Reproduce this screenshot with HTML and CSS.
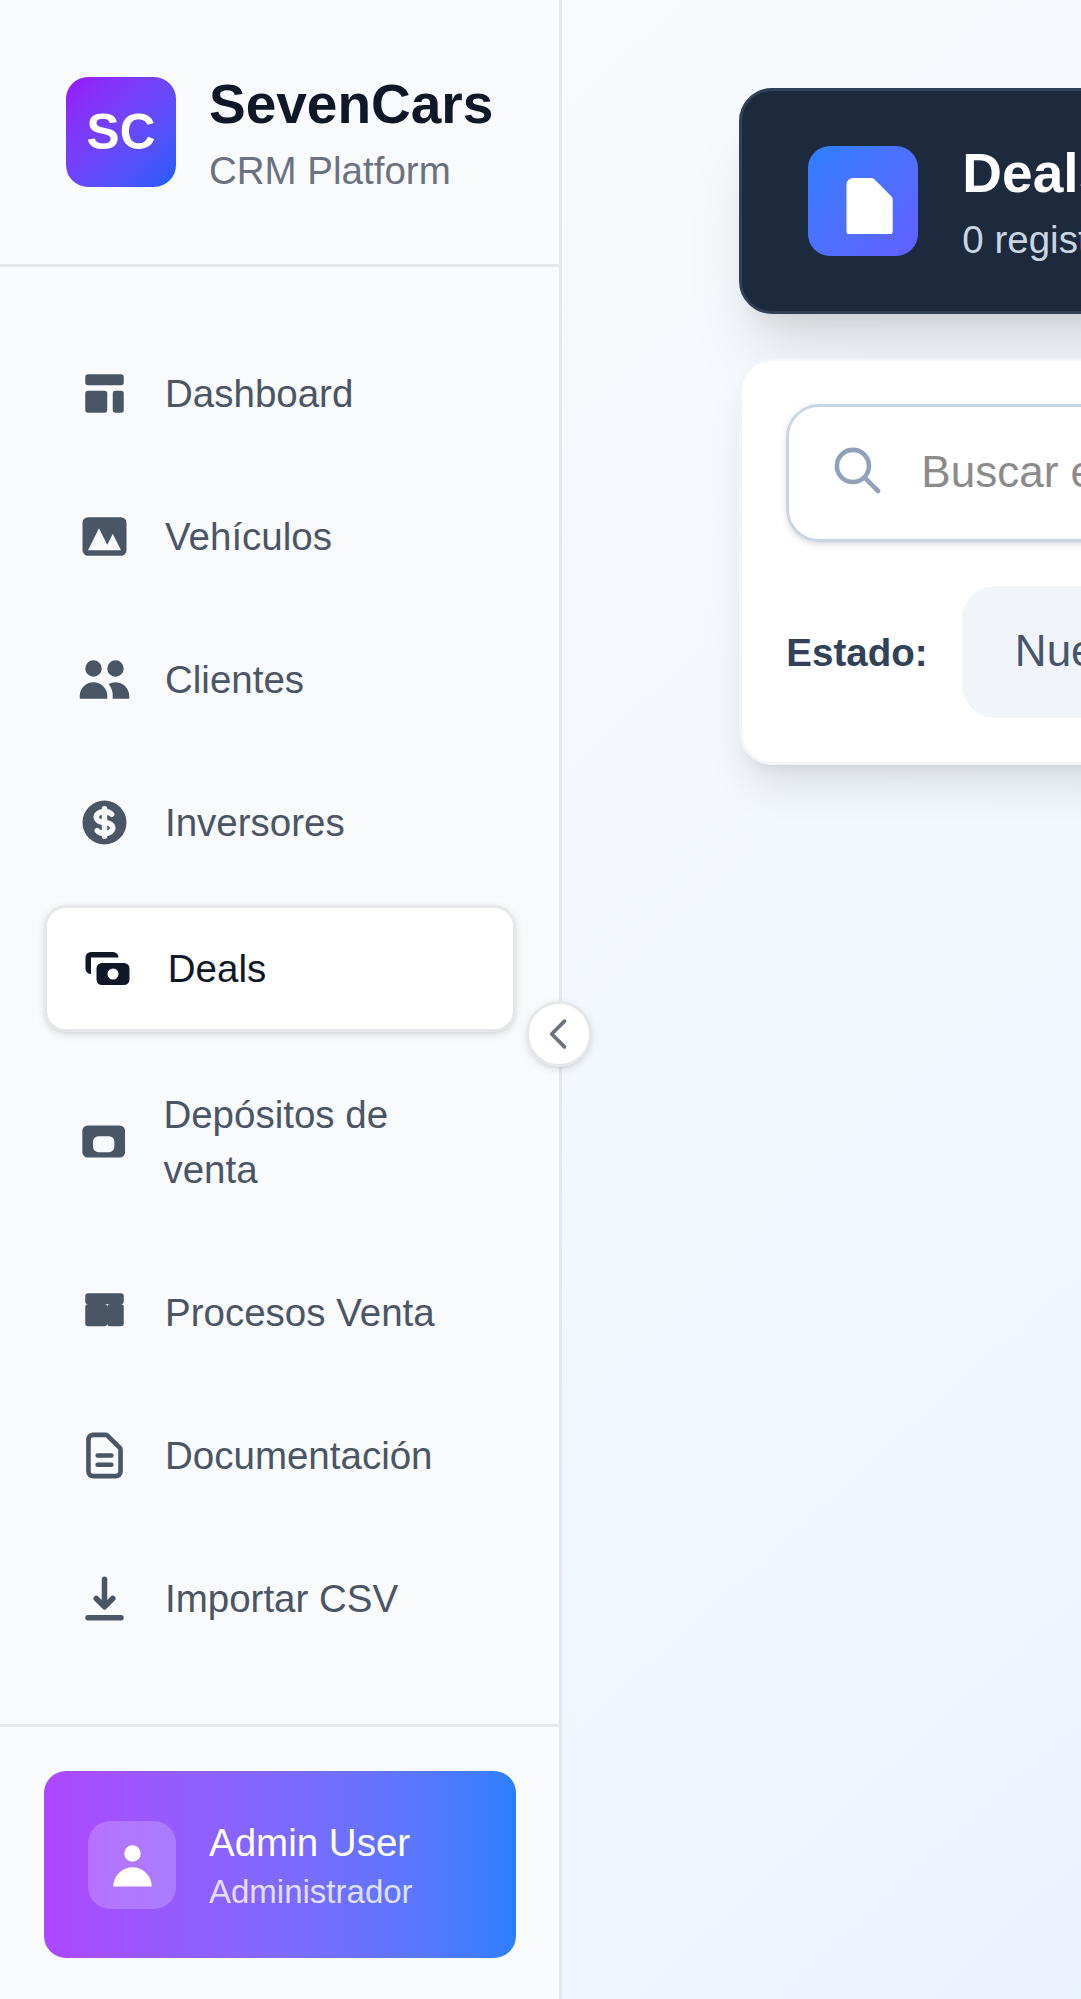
FILE: index.html
```html
<!DOCTYPE html>
<html lang="es">
<head>
<meta charset="utf-8">
<title>SevenCars CRM</title>
<link rel="stylesheet" href="styles.css">
</head>
<body>
<div class="app">
  <aside class="sidebar">
    <header class="brand">
      <div class="brand-logo">SC</div>
      <div>
        <h1 class="brand-name">SevenCars</h1>
        <p class="brand-sub">CRM Platform</p>
      </div>
    </header>
    <nav class="nav">
      <a class="nav-item">
        <svg class="icon" viewBox="0 0 20 20"><path d="M3 4a1 1 0 011-1h12a1 1 0 011 1v2a1 1 0 01-1 1H4a1 1 0 01-1-1V4zM3 10a1 1 0 011-1h6a1 1 0 011 1v6a1 1 0 01-1 1H4a1 1 0 01-1-1v-6zM14 9a1 1 0 00-1 1v6a1 1 0 001 1h2a1 1 0 001-1v-6a1 1 0 00-1-1h-2z"/></svg>
        <span>Dashboard</span>
      </a>
      <a class="nav-item">
        <svg class="icon" viewBox="0 0 20 20"><path fill-rule="evenodd" d="M4 3a2 2 0 00-2 2v10a2 2 0 002 2h12a2 2 0 002-2V5a2 2 0 00-2-2H4zm12 12H4l4-8 3 6 2-4 3 6z"/></svg>
        <span>Vehículos</span>
      </a>
      <a class="nav-item">
        <svg class="icon" viewBox="0 0 20 20"><path d="M9 6a3 3 0 11-6 0 3 3 0 016 0zM17 6a3 3 0 11-6 0 3 3 0 016 0zM12.93 17c.046-.327.07-.66.07-1a6.97 6.97 0 00-1.5-4.33A5 5 0 0119 16v1h-6.07zM6 11a5 5 0 015 5v1H1v-1a5 5 0 015-5z"/></svg>
        <span>Clientes</span>
      </a>
      <a class="nav-item">
        <svg class="icon" viewBox="0 0 20 20"><path d="M8.433 7.418c.155-.103.346-.196.567-.267v1.698a2.305 2.305 0 01-.567-.267C8.07 8.34 8 8.114 8 8c0-.114.07-.34.433-.582zM11 12.849v-1.698c.22.071.412.164.567.267.364.243.433.468.433.582 0 .114-.07.34-.433.582a2.305 2.305 0 01-.567.267z"/><path fill-rule="evenodd" d="M10 18a8 8 0 100-16 8 8 0 000 16zm1-13a1 1 0 10-2 0v.092a4.535 4.535 0 00-1.676.662C6.602 6.234 6 7.009 6 8c0 .99.602 1.765 1.324 2.246.48.32 1.054.545 1.676.662v1.941c-.391-.127-.68-.317-.843-.504a1 1 0 10-1.51 1.31c.562.649 1.413 1.076 2.353 1.253V15a1 1 0 102 0v-.092a4.535 4.535 0 001.676-.662C13.398 13.766 14 12.991 14 12c0-.99-.602-1.765-1.324-2.246A4.535 4.535 0 0011 9.092V7.151c.391.127.68.317.843.504a1 1 0 101.511-1.31c-.563-.649-1.413-1.076-2.354-1.253V5z"/></svg>
        <span>Inversores</span>
      </a>
      <a class="nav-item active">
        <svg class="icon" viewBox="0 0 20 20"><path fill-rule="evenodd" d="M4 4a2 2 0 00-2 2v4a2 2 0 002 2V6h10a2 2 0 00-2-2H4zm2 6a2 2 0 012-2h8a2 2 0 012 2v4a2 2 0 01-2 2H8a2 2 0 01-2-2v-4zm6 4a2 2 0 100-4 2 2 0 000 4z"/></svg>
        <span>Deals</span>
      </a>
      <a class="nav-item">
        <svg class="icon icon-narrow" viewBox="0 0 20 20"><path fill-rule="evenodd" d="M4 4a2 2 0 00-2 2v8a2 2 0 002 2h12a2 2 0 002-2V6a2 2 0 00-2-2H4zM6 10a2 2 0 012-2h4a2 2 0 012 2v2a2 2 0 01-2 2H8a2 2 0 01-2-2v-2z"/></svg>
        <span>Depósitos de venta</span>
      </a>
      <a class="nav-item">
        <svg class="icon" viewBox="0 0 20 20"><path d="M3 4a1 1 0 011-1h12a1 1 0 011 1v2a1 1 0 01-1 1H4a1 1 0 01-1-1V4zM3 8a1 1 0 011-1h6a1 1 0 011 1v6a1 1 0 01-1 1H4a1 1 0 01-1-1V8zM12 7a1 1 0 00-1 1v6a1 1 0 001 1h4a1 1 0 001-1V8a1 1 0 00-1-1h-4z"/></svg>
        <span>Procesos Venta</span>
      </a>
      <a class="nav-item">
        <svg class="icon line" viewBox="0 0 24 24"><path d="M9 12h6m-6 4h6m2 5H7a2 2 0 01-2-2V5a2 2 0 012-2h5.586a1 1 0 01.707.293l5.414 5.414a1 1 0 01.293.707V19a2 2 0 01-2 2z"/></svg>
        <span>Documentación</span>
      </a>
      <a class="nav-item">
        <svg class="icon" viewBox="0 0 20 20"><path fill-rule="evenodd" d="M3 17a1 1 0 011-1h12a1 1 0 110 2H4a1 1 0 01-1-1zm3.293-7.707a1 1 0 011.414 0L9 10.586V3a1 1 0 112 0v7.586l1.293-1.293a1 1 0 111.414 1.414l-3 3a1 1 0 01-1.414 0l-3-3a1 1 0 010-1.414z"/></svg>
        <span>Importar CSV</span>
      </a>
    </nav>
    <footer class="account">
      <div class="user-card">
        <div class="avatar">
          <svg class="icon" viewBox="0 0 20 20"><path d="M10 9a3 3 0 100-6 3 3 0 000 6zm-7 9a7 7 0 1114 0H3z"/></svg>
        </div>
        <div>
          <p class="user-name">Admin User</p>
          <p class="user-role">Administrador</p>
        </div>
      </div>
    </footer>
    <button class="collapse" aria-label="Contraer">
      <svg class="chevron line" viewBox="0 0 24 24"><path d="M15 19l-7-7 7-7"/></svg>
    </button>
  </aside>
  <main class="main">
    <section class="page-head">
      <div class="page-icon">
        <svg viewBox="0 0 20 20"><path d="M17 21H7a2 2 0 01-2-2V5a2 2 0 012-2h5.586a1 1 0 01.707.293l5.414 5.414a1 1 0 01.293.707V19a2 2 0 01-2 2z"/></svg>
      </div>
      <div>
        <h2 class="page-title">Deals</h2>
        <p class="page-count">0 registros</p>
      </div>
    </section>
    <section class="filters">
      <div class="search">
        <svg class="icon line" viewBox="0 0 24 24"><path d="M21 21l-6-6m2-5a7 7 0 11-14 0 7 7 0 0114 0z"/></svg>
        <span class="placeholder">Buscar en deals...</span>
      </div>
      <div class="filter-row">
        <span class="filter-label">Estado:</span>
        <div class="pill">Nuevo</div>
      </div>
    </section>
  </main>
</div>
</body>
</html>
```
FILE: styles.css
```css
* { box-sizing: border-box; margin: 0; padding: 0; }

html, body { height: 100%; overflow: hidden; }

body {
  font-family: "Liberation Sans", Arial, sans-serif;
  font-size: 38.5px;
  line-height: 55px;
}

.app {
  display: flex;
  height: 1999px;
  overflow: hidden;
}

.sidebar {
  position: relative;
  flex: 0 0 560px;
  height: 2002px;
  border-right: 3px solid #e5e7eb;
  background: #f9fafc;
}

.brand {
  display: flex;
  align-items: center;
  gap: 33px;
  padding: 66px;
  height: 267px;
  border-bottom: 3px solid #e5e7eb;
}

.brand-logo {
  width: 110px;
  height: 110px;
  border-radius: 22px;
  background: linear-gradient(to bottom right in oklab, #9810fa, #155dfc);
  color: #fff;
  font-size: 49.5px;
  font-weight: 700;
  line-height: 109px;
  text-align: center;
}

.brand-name {
  color: #101828;
  font-size: 55px;
  line-height: 77px;
}

.brand-sub { color: #6a7282; }

.nav {
  display: flex;
  flex-direction: column;
  gap: 22px;
  padding: 66px 43px 65.5px 44px;
}

.nav-item {
  display: flex;
  align-items: center;
  gap: 33px;
  padding: 33px;
  border-radius: 22px;
  color: #4a5565;
}

.nav-item.active {
  padding: 32.75px;
  border: 3px solid #e5e7eb;
  background: #fff;
  color: #101828;
  box-shadow: 0 2.75px 8.25px rgba(0, 0, 0, .1), 0 2.75px 5.5px -2.75px rgba(0, 0, 0, .1);
}

.icon {
  flex: none;
  width: 55px;
  height: 55px;
  fill: currentColor;
}

.icon-narrow { width: 53.4px; }

.line {
  fill: none;
  stroke: currentColor;
  stroke-width: 2;
  stroke-linecap: round;
  stroke-linejoin: round;
}

.account {
  padding: 44px 43px 44px 44px;
  border-top: 3px solid #e5e7eb;
}

.user-card {
  display: flex;
  align-items: center;
  gap: 33px;
  padding: 44px;
  border-radius: 22px;
  background: linear-gradient(to right in oklab, #ad46ff, #2b7fff);
  color: #fff;
}

.avatar {
  display: grid;
  place-items: center;
  width: 88px;
  height: 88px;
  border-radius: 22px;
  background: rgba(255, 255, 255, .2);
}

.user-role {
  color: rgba(255, 255, 255, .8);
  font-size: 33px;
  line-height: 44px;
}

.collapse {
  position: absolute;
  top: 1001px;
  right: -33px;
  display: grid;
  place-items: center;
  width: 66px;
  height: 66px;
  border: 3px solid #e5e7eb;
  border-radius: 50%;
  background: #fff;
  color: #6a7282;
  box-shadow: 0 2.75px 8.25px rgba(0, 0, 0, .1), 0 2.75px 5.5px -2.75px rgba(0, 0, 0, .1);
}

.chevron { width: 44px; height: 44px; }

.main {
  display: flex;
  flex: none;
  flex-direction: column;
  gap: 44px;
  width: 2200px;
  padding: 88px 176px 0 177px;
  background: linear-gradient(to bottom right in oklab, #f8fafc, #eff6ff, #e0e7ff);
}

.page-head {
  display: flex;
  align-items: center;
  gap: 44px;
  height: 225.5px;
  padding: 0 66px;
  border: 3px solid #314158;
  border-radius: 33px;
  background: #1d293d;
  box-shadow: 0 55px 68.75px -13.75px rgba(0, 0, 0, .1), 0 22px 27.5px -16.5px rgba(0, 0, 0, .1);
}

.page-icon {
  display: grid;
  place-items: center;
  width: 110px;
  height: 110px;
  border-radius: 22px;
  background: linear-gradient(to bottom right in oklab, #2b7fff, #615fff);
}

.page-icon svg {
  width: 66px;
  height: 66px;
  fill: #fff;
}

.page-title {
  color: #fff;
  font-size: 55px;
  line-height: 77px;
}

.page-count { color: #cad5e2; }

.filters {
  display: flex;
  flex-direction: column;
  gap: 44px;
  padding: 43.5px 44px 44px;
  border: 3px solid #f1f5f9;
  border-radius: 33px;
  background: #fff;
  box-shadow: 0 27.5px 41.25px -8.25px rgba(0, 0, 0, .1), 0 11px 16.5px -11px rgba(0, 0, 0, .1);
}

.search {
  display: flex;
  align-items: center;
  gap: 36px;
  height: 138px;
  padding: 0 41px 5px;
  border: 3px solid #cad5e2;
  border-radius: 33px;
  color: #90a1b9;
  box-shadow: 0 2.75px 8.25px rgba(0, 0, 0, .1), 0 2.75px 5.5px -2.75px rgba(0, 0, 0, .1);
}

.placeholder {
  padding-top: 2px;
  color: #8b8b8b;
  font-size: 44px;
}

.filter-row {
  display: flex;
  align-items: center;
}

.filter-label {
  flex: 0 0 176px;
  padding-top: 1px;
  color: #314158;
  font-weight: 700;
}

.pill {
  flex: 1;
  height: 132px;
  padding: 0 52.5px;
  border-radius: 33px;
  background: #f1f5f9;
  color: #45556c;
  font-size: 44px;
  line-height: 130px;
}
```
